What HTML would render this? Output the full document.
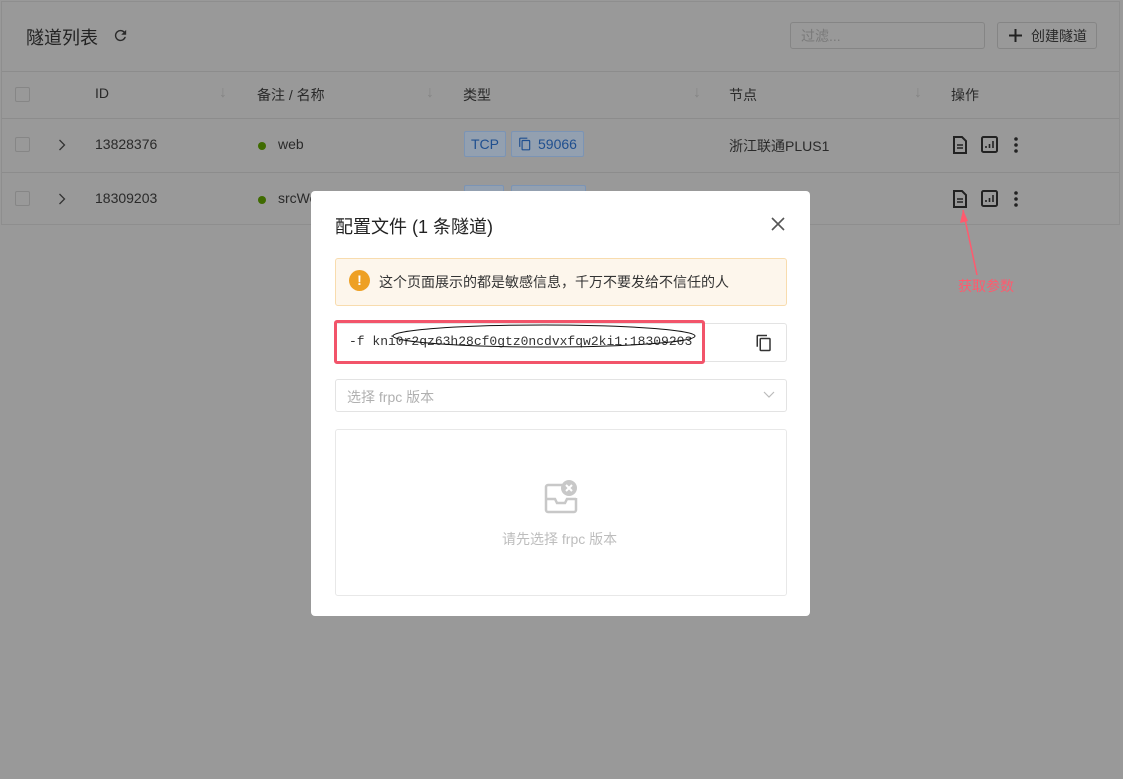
<!DOCTYPE html><html><head><meta charset="utf-8"><style>
*{box-sizing:border-box;margin:0;padding:0}
body{width:1123px;height:779px;background:#999;font-family:"Liberation Sans","Noto Sans CJK SC",sans-serif;position:relative;overflow:hidden;color:#222}
.card{position:absolute;left:1px;top:1px;width:1119px;height:224px;border:1px solid #8e8e8e;background:#999}
.abs{position:absolute}
.line{position:absolute;left:0;width:100%;height:1px;background:#8c8c8c}
.cb{position:absolute;width:15px;height:15px;border:1px solid #868686;border-radius:2px;left:13px}
.t{position:absolute;font-size:14px;color:#2a2a2a;white-space:nowrap}
.tag{position:absolute;height:26px;border:1px solid #7b94b5;background:#93a0b0;color:#1f4f8f;font-size:14px;line-height:24px;padding:0 6px;border-radius:2px}
.dot{position:absolute;width:8px;height:8px;border-radius:50%;background:#3f6b00}
.ar{position:absolute;font-size:16px;color:#858585;font-weight:300}
.modal{position:absolute;left:311px;top:191px;width:499px;height:425px;background:#fff;border-radius:4px}
</style></head><body>
<div class="card">
 <div class="t" style="left:24px;top:22px;font-size:18px;color:#222">隧道列表</div>
 <svg class="abs" style="left:110px;top:25px" width="17" height="17" viewBox="0 0 24 24"><path d="M17.65 6.35A7.96 7.96 0 0 0 12 4a8 8 0 1 0 7.73 10h-2.08A6 6 0 1 1 12 6c1.66 0 3.14.69 4.22 1.78L13 11h7V4l-2.35 2.35z" fill="#2a2a2a"/></svg>
 <div class="abs" style="left:788px;top:20px;width:195px;height:27px;border:1px solid #858585;border-radius:3px;font-size:14px;color:#7a7a7a;padding:3px 10px">过滤...</div>
 <div class="abs" style="left:995px;top:20px;width:100px;height:27px;border:1px solid #858585;border-radius:3px;font-size:14px;color:#2a2a2a;padding:3px 0 0 33px">创建隧道</div>
 <svg class="abs" style="left:1007px;top:27px" width="13" height="13"><path d="M6.5 0v13M0 6.5h13" stroke="#222" stroke-width="2"/></svg>
 <div class="line" style="top:69px"></div>
 <div class="line" style="top:116px"></div>
 <div class="line" style="top:170px"></div>
 <div class="cb" style="top:85px"></div><div class="cb" style="top:135px"></div><div class="cb" style="top:189px"></div>
 <div class="t" style="left:93px;top:83px">ID</div>
 <div class="ar" style="left:217px;top:82px">↓</div>
 <div class="t" style="left:255px;top:83px">备注 / 名称</div>
 <div class="ar" style="left:424px;top:82px">↓</div>
 <div class="t" style="left:461px;top:83px">类型</div>
 <div class="ar" style="left:691px;top:82px">↓</div>
 <div class="t" style="left:727px;top:83px">节点</div>
 <div class="ar" style="left:912px;top:82px">↓</div>
 <div class="t" style="left:949px;top:83px">操作</div>
 <svg class="abs" style="left:56px;top:137px" width="8" height="12"><path d="M1.5 1l5 5-5 5" fill="none" stroke="#333" stroke-width="1.3"/></svg>
 <svg class="abs" style="left:56px;top:191px" width="8" height="12"><path d="M1.5 1l5 5-5 5" fill="none" stroke="#333" stroke-width="1.3"/></svg>
 <div class="t" style="left:93px;top:134px">13828376</div>
 <div class="t" style="left:93px;top:188px">18309203</div>
 <div class="dot" style="left:256px;top:140px"></div><div class="dot" style="left:256px;top:194px"></div>
 <div class="t" style="left:276px;top:134px">web</div>
 <div class="t" style="left:276px;top:188px">srcWeb</div>
 <div class="tag" style="left:462px;top:129px">TCP</div>
 <div class="tag" style="left:509px;top:129px;padding-left:26px">59066</div>
 <svg class="abs" style="left:516px;top:135px" width="14" height="14" viewBox="0 0 24 24"><path d="M16 1H4a2 2 0 0 0-2 2v14h2V3h12V1zm3 4H8a2 2 0 0 0-2 2v14a2 2 0 0 0 2 2h11a2 2 0 0 0 2-2V7a2 2 0 0 0-2-2zm0 16H8V7h11v14z" fill="#1f4f8f"/></svg>
 <div class="tag" style="left:462px;top:183px;width:40px"></div>
 <div class="tag" style="left:509px;top:183px;width:75px"></div>
 <div class="t" style="left:727px;top:134px">浙江联通PLUS1</div>
 <svg class="abs" style="left:949px;top:133px" width="18" height="20" viewBox="0 0 18 20"><path d="M3 2h8l4 4v12H3z" fill="none" stroke="#222" stroke-width="2"/><path d="M6 10h6M6 13h6" stroke="#222" stroke-width="1.5"/></svg>
 <svg class="abs" style="left:979px;top:134px" width="17" height="17" viewBox="0 0 17 17"><rect x="1" y="1" width="15" height="15" rx="1.5" fill="none" stroke="#222" stroke-width="2"/><path d="M5 12v-2M8.5 12V8M12 12V5" stroke="#222" stroke-width="1.6"/></svg>
 <svg class="abs" style="left:1011px;top:134px" width="6" height="18"><circle cx="3" cy="3" r="1.8" fill="#222"/><circle cx="3" cy="9" r="1.8" fill="#222"/><circle cx="3" cy="15" r="1.8" fill="#222"/></svg>
 <svg class="abs" style="left:949px;top:187px" width="18" height="20" viewBox="0 0 18 20"><path d="M3 2h8l4 4v12H3z" fill="none" stroke="#222" stroke-width="2"/><path d="M6 10h6M6 13h6" stroke="#222" stroke-width="1.5"/></svg>
 <svg class="abs" style="left:979px;top:188px" width="17" height="17" viewBox="0 0 17 17"><rect x="1" y="1" width="15" height="15" rx="1.5" fill="none" stroke="#222" stroke-width="2"/><path d="M5 12v-2M8.5 12V8M12 12V5" stroke="#222" stroke-width="1.6"/></svg>
 <svg class="abs" style="left:1011px;top:188px" width="6" height="18"><circle cx="3" cy="3" r="1.8" fill="#222"/><circle cx="3" cy="9" r="1.8" fill="#222"/><circle cx="3" cy="15" r="1.8" fill="#222"/></svg>
</div>
<svg class="abs" style="left:955px;top:205px" width="30" height="80"><path d="M8 5 L22 70" stroke="#ff5a6e" stroke-width="1.5"/><path d="M5 18 L8 5 L13 16" fill="#ff5a6e"/></svg>
<div class="t" style="left:958px;top:276px;font-size:14px;color:#ff5a6e">获取参数</div>
<div class="modal">
 <div class="t" style="left:24px;top:22px;font-size:18px;color:#222">配置文件 (1 条隧道)</div>
 <svg class="abs" style="left:460px;top:26px" width="14" height="14"><path d="M1 1l12 12M13 1L1 13" stroke="#555" stroke-width="1.6"/></svg>
 <div class="abs" style="left:24px;top:67px;width:452px;height:48px;background:#fdf6ec;border:1px solid #f8dcae;border-radius:3px"></div>
 <div class="abs" style="left:38px;top:79px;width:21px;height:21px;border-radius:50%;background:#eea023;color:#fff;font-weight:bold;font-size:14px;text-align:center;line-height:21px">!</div>
 <div class="t" style="left:68px;top:81px;font-size:14px;color:#333">这个页面展示的都是敏感信息，千万不要发给不信任的人</div>
 <div class="abs" style="left:24px;top:132px;width:452px;height:39px;border:1px solid #e3e3e3;border-radius:3px"></div>
 <div class="abs" style="left:23px;top:129px;width:371px;height:44px;border:3px solid #f2546a;border-radius:3px"></div>
 <div class="t" style="left:38px;top:143px;font-family:'Liberation Mono',monospace;font-size:13px;color:#333">-f kni0r2qz63h28cf0gtz0ncdvxfqw2ki1:18309203</div>
 <svg class="abs" style="left:80px;top:132px" width="312" height="30"><ellipse cx="153" cy="13" rx="151" ry="11" fill="none" stroke="#111" stroke-width="1"/></svg>
 <svg class="abs" style="left:444px;top:142px" width="18" height="20" viewBox="0 0 24 24"><path d="M16 1H4a2 2 0 0 0-2 2v14h2V3h12V1zm3 4H8a2 2 0 0 0-2 2v14a2 2 0 0 0 2 2h11a2 2 0 0 0 2-2V7a2 2 0 0 0-2-2zm0 16H8V7h11v14z" fill="#333"/></svg>
 <div class="abs" style="left:24px;top:188px;width:452px;height:33px;border:1px solid #e3e3e3;border-radius:3px;font-size:14px;color:#b0b0b0;padding:7px 11px">选择 frpc 版本</div>
 <svg class="abs" style="left:452px;top:200px" width="12" height="8"><path d="M1 1l5 5 5-5" fill="none" stroke="#bbb" stroke-width="1.2"/></svg>
 <div class="abs" style="left:24px;top:238px;width:452px;height:167px;border:1px solid #e8e8e8;border-radius:3px"></div>
 <svg class="abs" style="left:231px;top:287px" width="38" height="38" viewBox="0 0 38 38"><path d="M20 7H6a2 2 0 0 0-2 2v23a2 2 0 0 0 2 2h26a2 2 0 0 0 2-2V20" fill="none" stroke="#c8c8c8" stroke-width="2.5"/><path d="M4 21h9l2 4h8l2-4h9" fill="none" stroke="#c8c8c8" stroke-width="2.5"/><circle cx="27" cy="10" r="8" fill="#c8c8c8"/><path d="M24 7l6 6M30 7l-6 6" stroke="#fff" stroke-width="2"/></svg>
 <div class="t" style="left:191px;top:338px;font-size:14px;color:#bdbdbd">请先选择 frpc 版本</div>
</div>
</body></html>
